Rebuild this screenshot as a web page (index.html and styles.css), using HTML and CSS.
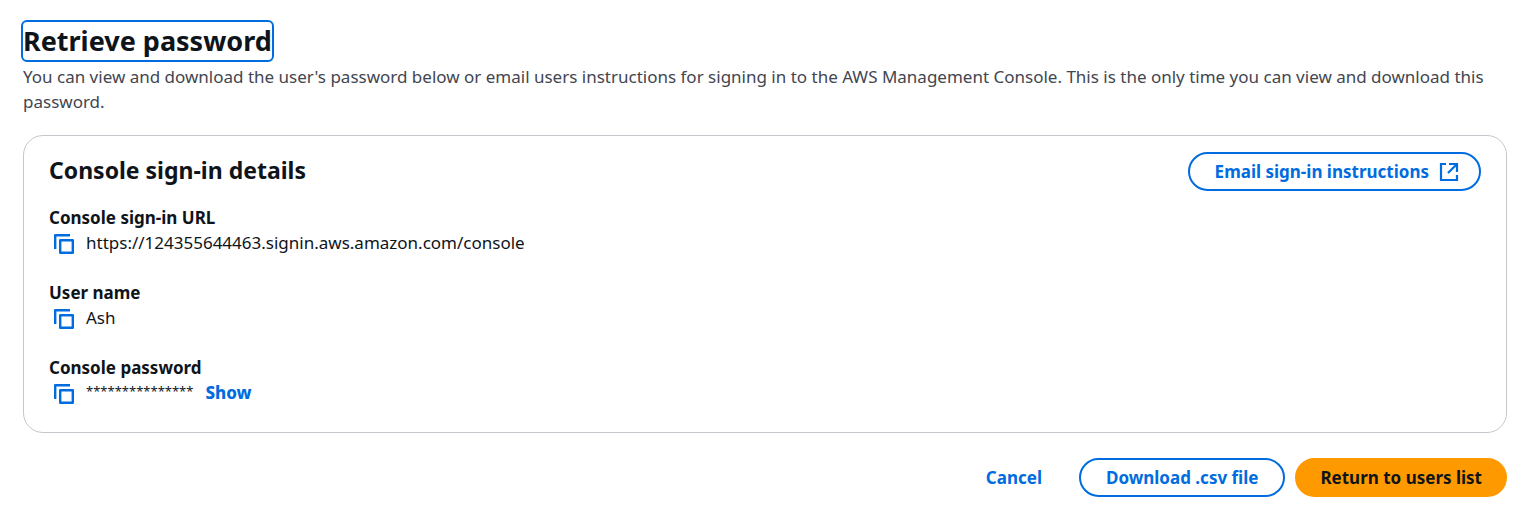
FILE: index.html
```html
<!DOCTYPE html>
<html lang="en">
<head>
<meta charset="utf-8">
<title>Retrieve password</title>
<link rel="stylesheet" href="styles.css">
</head>
<body>
<main class="page">
  <header class="intro">
    <h1 class="title" tabindex="-1">Retrieve password</h1>
    <p class="description">You can view and download the user's password below or email users instructions for signing in to the AWS Management Console. This is the only time you can view and download this password.</p>
  </header>
  <section class="card">
    <div class="card-header">
      <h2 class="card-title">Console sign-in details</h2>
      <button class="button with-icon" type="button">Email sign-in instructions
        <svg class="icon" viewBox="0 0 20 20" aria-hidden="true"><path d="M7 2H2v16h16v-5M10 2h8v8M9 11l9-9"/></svg>
      </button>
    </div>
    <dl class="details">
      <div class="field">
        <dt class="label">Console sign-in URL</dt>
        <dd class="value"><button class="copy" type="button" aria-label="Copy sign-in URL"><svg class="icon" viewBox="0 0 20 20" aria-hidden="true"><path d="M1.2 15V1.2H16M6.2 6.2h12.6v12.6H6.2z"/></svg></button><span>https://124355644463.signin.aws.amazon.com/console</span></dd>
      </div>
      <div class="field">
        <dt class="label">User name</dt>
        <dd class="value"><button class="copy" type="button" aria-label="Copy user name"><svg class="icon" viewBox="0 0 20 20" aria-hidden="true"><path d="M1.2 15V1.2H16M6.2 6.2h12.6v12.6H6.2z"/></svg></button><span>Ash</span></dd>
      </div>
      <div class="field">
        <dt class="label">Console password</dt>
        <dd class="value"><button class="copy" type="button" aria-label="Copy password"><svg class="icon" viewBox="0 0 20 20" aria-hidden="true"><path d="M1.2 15V1.2H16M6.2 6.2h12.6v12.6H6.2z"/></svg></button><span class="masked">***************</span><button class="show" type="button">Show</button></dd>
      </div>
    </dl>
  </section>
  <footer class="actions">
    <button class="button link" type="button">Cancel</button>
    <button class="button" type="button">Download .csv file</button>
    <button class="button primary" type="button">Return to users list</button>
  </footer>
</main>
</body>
</html>
```
FILE: styles.css
```css
* { box-sizing: border-box; }
body {
  margin: 0;
  background: #fff;
  color: #0f141a;
  font: 17px/25px "Noto Sans", "Open Sans", sans-serif;
}
h1, h2, p, dl, dd { margin: 0; }
button { font: inherit; font-weight: 700; color: #006ce0; cursor: pointer; }
.page { padding: 22px 21px 15px 23px; }
.title {
  width: fit-content;
  font-size: 27px;
  line-height: 38px;
  outline: 2px solid #006ce0;
  border-radius: 4px;
}
.description { padding-top: 4px; color: #424650; }
.card {
  margin-top: 21px;
  padding: 16px 25px 27px;
  border: 1px solid #c6c6cd;
  border-radius: 20px;
}
.card-header { display: flex; justify-content: space-between; align-items: flex-start; }
.card-title { font-size: 23px; line-height: 36px; }
.button {
  display: inline-flex;
  align-items: center;
  gap: 10px;
  padding: 5px 25px;
  border: 2px solid #006ce0;
  border-radius: 20px;
  background: #fff;
}
.with-icon { padding-right: 20px; }
.icon { width: 20px; height: 20px; fill: none; stroke: currentColor; stroke-width: 2.2; }
.details { display: grid; gap: 25px; padding-top: 14px; }
.label { font-weight: 700; }
.value { display: flex; align-items: center; }
.copy { display: flex; padding: 2px 12px 0 5px; border: 0; background: none; }
.copy .icon { stroke-width: 2.4; stroke-linejoin: round; }
.masked { font-size: 13px; line-height: 23px; align-self: flex-start; }
.show { padding: 0; margin-left: 12px; border: 0; background: none; font-weight: 800; }
.actions { display: flex; justify-content: flex-end; gap: 10px; padding-top: 25px; }
.link { border-color: transparent; }
.primary { padding: 5px 23px; background: #ff9900; border-color: #ff9900; color: #0f141a; }
```
